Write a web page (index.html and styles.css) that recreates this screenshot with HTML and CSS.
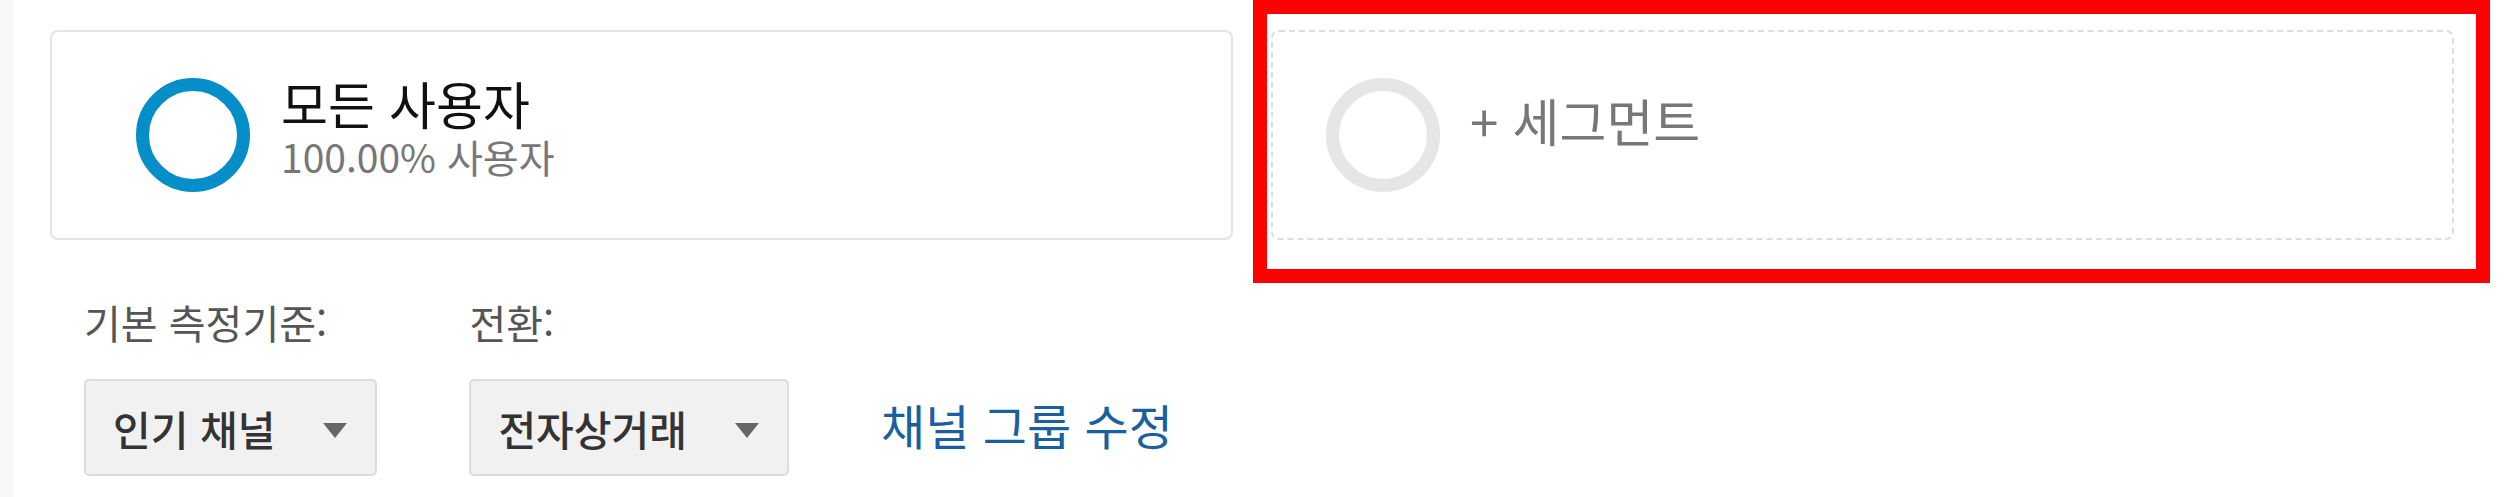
FILE: index.html
```html
<!DOCTYPE html>
<html lang="ko">
<head>
<meta charset="utf-8">
<link rel="stylesheet" href="styles.css">
</head>
<body>
<div class="page">
  <div class="strip"></div>
  <div class="main">
    <div class="cards">
      <div class="card card-solid">
        <div class="ring ring-blue"></div>
        <div class="seg-text">
          <div class="seg-title">모든 사용자</div>
          <div class="seg-sub">100.00% 사용자</div>
        </div>
      </div>
      <div class="card card-dashed">
        <div class="ring ring-gray"></div>
        <div class="seg-add">+ 세그먼트</div>
      </div>
    </div>
    <div class="controls">
      <div class="label">기본 측정기준:</div>
      <div class="label">전환:</div>
      <div></div>
      <div class="dropdown"><span>인기 채널</span><span class="arrow"></span></div>
      <div class="dropdown"><span>전자상거래</span><span class="arrow"></span></div>
      <a class="link">채널 그룹 수정</a>
    </div>
  </div>
  <div class="highlight"></div>
</div>
</body>
</html>
```
FILE: styles.css
```css
html, body {
  margin: 0;
  padding: 0;
  background: #ffffff;
}
body {
  font-family: "Noto Sans CJK KR", "Noto Sans", sans-serif;
}
.page {
  position: relative;
  display: flex;
  width: 2520px;
  height: 497px;
  overflow: hidden;
}
.strip {
  width: 14px;
  flex: 0 0 14px;
  background: #f7f8fa;
}
.main {
  padding: 30px 0 0 36px;
}
.cards {
  display: flex;
  gap: 38px;
}
.card {
  flex: none;
  width: 1183px;
  box-sizing: border-box;
  height: 210px;
  border-radius: 8px;
  display: flex;
  align-items: center;
}
.card-solid {
  border: 2px solid #e4e4e4;
  padding-left: 84px;
}
.card-dashed {
  border: 2px dashed #dddddd;
  padding-left: 53px;
}
.ring {
  box-sizing: border-box;
  width: 114px;
  height: 114px;
  border-radius: 50%;
  flex: 0 0 auto;
}
.ring-blue {
  border: 13px solid #068ec8;
}
.ring-gray {
  border: 13px solid #e6e6e6;
}
.seg-text {
  margin-left: 31px;
  margin-bottom: 18px;
  display: flex;
  flex-direction: column;
  gap: 4px;
}
.seg-title {
  font-size: 51px;
  line-height: 56px;
  color: #111111;
}
.seg-sub {
  font-size: 39px;
  line-height: 43px;
  color: #777777;
}
.seg-add {
  margin-left: 30px;
  margin-bottom: 30px;
  font-size: 51px;
  line-height: 56px;
  color: #777777;
}
.controls {
  display: grid;
  grid-template-columns: auto auto auto;
  justify-content: start;
  column-gap: 92px;
  row-gap: 37px;
  margin-top: 62px;
  margin-left: 34px;
}
.label {
  font-size: 40px;
  line-height: 40px;
  color: #555555;
}
.dropdown {
  box-sizing: border-box;
  height: 97px;
  display: flex;
  align-items: center;
  gap: 48px;
  padding: 0 28px 0 27px;
  background: #f1f1f1;
  border: 2px solid #dcdcdc;
  border-radius: 5px;
  font-size: 41px;
  font-weight: 500;
  color: #333333;
}
.arrow {
  width: 0;
  height: 0;
  border-left: 12px solid transparent;
  border-right: 12px solid transparent;
  border-top: 15px solid #666666;
  margin-top: 6px;
}
.link {
  align-self: center;
  font-size: 48px;
  line-height: 52px;
  color: #1a5f9e;
  margin-bottom: 8px;
}
.highlight {
  position: absolute;
  left: 1253px;
  top: 0;
  width: 1237px;
  height: 283px;
  box-sizing: border-box;
  border: 14px solid #ff0000;
}
```
